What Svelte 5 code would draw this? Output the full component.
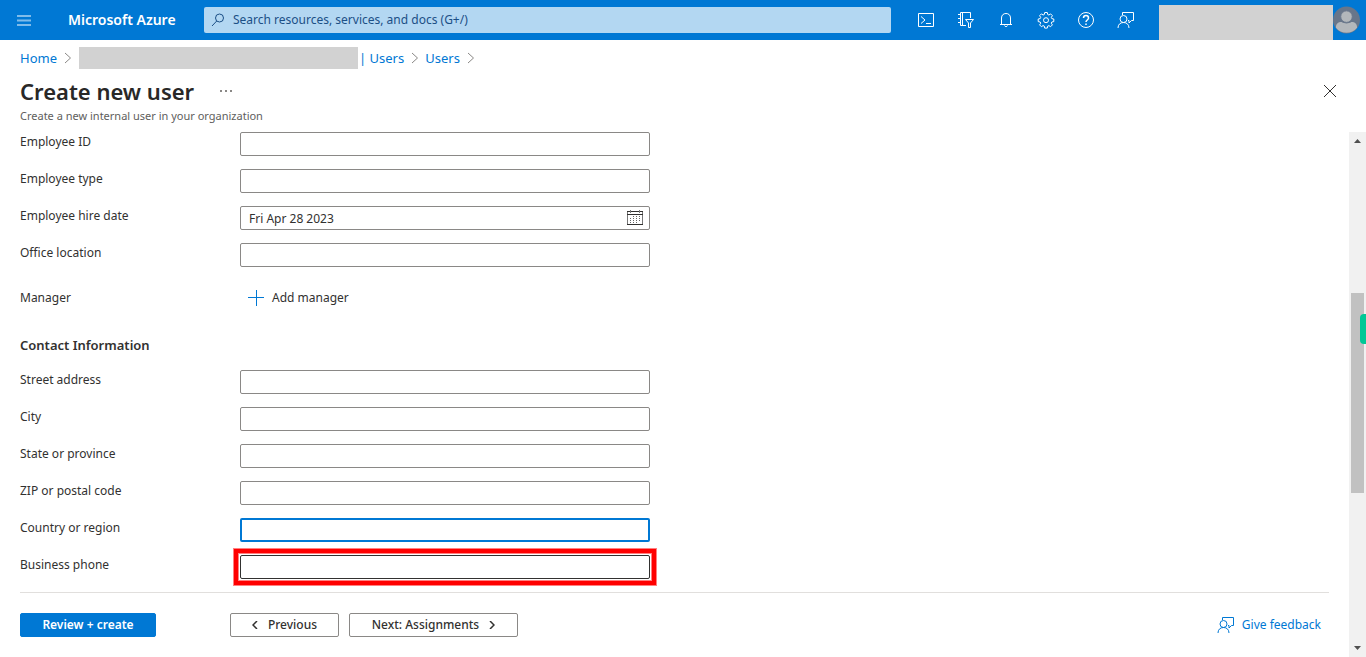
<script>
	const employeeFields = [
		{ id: 'employee-id', label: 'Employee ID' },
		{ id: 'employee-type', label: 'Employee type' },
		{ id: 'hire-date', label: 'Employee hire date', value: 'Fri Apr 28 2023', calendar: true },
		{ id: 'office', label: 'Office location' }
	];

	const contactFields = [
		{ id: 'street', label: 'Street address' },
		{ id: 'city', label: 'City' },
		{ id: 'state', label: 'State or province' },
		{ id: 'zip', label: 'ZIP or postal code' },
		{ id: 'country', label: 'Country or region', active: true },
		{ id: 'phone', label: 'Business phone', marked: true }
	];
</script>

{#snippet chevron()}
	<svg class="chevron" width="8" height="12" viewBox="0 0 8 12" aria-hidden="true">
		<path d="M1 1l5.500 5L1 11" />
	</svg>
{/snippet}

{#snippet feedbackIcon()}
	<svg width="18" height="18" viewBox="0 0 18 18" aria-hidden="true">
		<path d="M5.500 4V1.500h11v8h-2L12 12V9.500h-1" />
		<circle cx="6.500" cy="8" r="3.500" />
		<path d="M1 17c0-3.500 2.300-5.500 5.500-5.500S12 13.500 12 17" />
	</svg>
{/snippet}

{#snippet field(f)}
	<div class="row">
		<label for={f.id}>{f.label}</label>
		<div class="control" class:marked={f.marked}>
			<input id={f.id} type="text" class:active={f.active} value={f.value ?? ''} />
			{#if f.calendar}
				<button class="calendar" type="button" aria-label="Pick a date">
					<svg width="16" height="16" viewBox="0 0 16 16" shape-rendering="crispEdges" aria-hidden="true">
						<path d="M.5 2v13M15.500 2v13" stroke="#777" />
						<path d="M0 2.500h16M0 5.500h16M0 15.500h16" />
						<path d="M3.500 1v3M12.500 1v3" stroke="#777" />
						<path d="M6 7.500h8M3 9.500h11M3 11.500h11M3 13.500h8" stroke="#666" stroke-dasharray="1 2" />
					</svg>
				</button>
			{/if}
		</div>
	</div>
{/snippet}

<div class="portal">
	<header class="topbar">
		<button class="menu" aria-label="Show portal menu">
			<svg width="14" height="11" viewBox="0 0 14 11" aria-hidden="true">
				<path d="M0 1h14M0 5.500h14M0 10h14" />
			</svg>
		</button>
		<a class="brand" href="#home">Microsoft Azure</a>
		<div class="search">
			<svg width="14" height="14" viewBox="0 0 14 14" aria-hidden="true">
				<circle cx="8.500" cy="5" r="4" />
				<path d="M5.700 8L1 13" />
			</svg>
			<input type="text" aria-label="Search" placeholder="Search resources, services, and docs (G+/)" />
		</div>
		<nav class="tools">
			<button aria-label="Cloud Shell">
				<svg width="18" height="18" viewBox="0 0 18 18" aria-hidden="true">
					<path d="M1.500 2.500h15v13h-15zM4 5.500l4 3.500-4 3.500M9 12.500h5" />
				</svg>
			</button>
			<button aria-label="Directories and subscriptions">
				<svg width="18" height="18" viewBox="0 0 18 18" aria-hidden="true">
					<path d="M9 14.500H3.500v-13h10V7M5.500 1.500v13M1 3.500h3M1 7.500h3M1 11.500h3" />
					<path d="M8.500 8.500h8l-3 3.500v4.500h-2V12z" />
				</svg>
			</button>
			<button aria-label="Notifications">
				<svg width="18" height="18" viewBox="0 0 18 18" aria-hidden="true">
					<path d="M4.500 13.500V7c0-3 2-4.500 4.500-4.500S13.500 4 13.500 7v6.500M3 13.500h12M7.500 14.500c.5 1.500 2.500 1.500 3 0" />
				</svg>
			</button>
			<button aria-label="Settings">
				<svg width="18" height="18" viewBox="0 0 18 18" aria-hidden="true">
					<path
						d="M7.700 1.500h2.600l.4 2 1.200.5 1.700-1.100 1.800 1.800-1.100 1.700.5 1.200 2 .4v2.600l-2 .4-.5 1.200 1.100 1.700-1.800 1.800-1.700-1.100-1.200.5-.4 2H7.700l-.4-2-1.200-.5-1.700 1.100-1.800-1.800 1.100-1.700-.5-1.200-2-.4V8l2-.4.5-1.200-1.100-1.700 1.800-1.800L6.100 4l1.200-.5z"
					/>
					<circle cx="9" cy="9.200" r="2.500" />
				</svg>
			</button>
			<button aria-label="Help">
				<svg width="18" height="18" viewBox="0 0 18 18" aria-hidden="true">
					<circle cx="9" cy="9" r="7.500" />
					<path d="M6.500 7c0-3.300 5-3.300 5 0 0 2-2.500 2-2.500 4M9 12.500V14" stroke-width="1.500" />
				</svg>
			</button>
			<button aria-label="Feedback">{@render feedbackIcon()}</button>
		</nav>
		<div class="account"></div>
		<button class="avatar" aria-label="Account">
			<svg width="27" height="28" viewBox="0 0 28 28" aria-hidden="true">
				<circle cx="14" cy="14" r="14" fill="#68768a" />
				<path d="M3 22c0-4 2-6 6-6 3 2 7 2 10 0 4 0 6 2 6 6a14 14 0 0 1-22 0z" fill="#b3b7bb" />
				<circle cx="14" cy="10.500" r="6" fill="#b3b7bb" stroke="#68768a" />
			</svg>
		</button>
	</header>

	<div class="heading">
		<nav class="breadcrumb">
			<a href="#home">Home</a>
			{@render chevron()}
			<span class="redacted"></span>
			<a href="#tenant">| Users</a>
			{@render chevron()}
			<a href="#users">Users</a>
			{@render chevron()}
		</nav>
		<div class="title-row">
			<h1>Create new user</h1>
			<button class="more" aria-label="More">
				<svg width="12" height="2" viewBox="0 0 12 2" aria-hidden="true">
					<path d="M0 0h2v2H0zM5 0h2v2H5zM10 0h2v2h-2z" />
				</svg>
			</button>
			<button class="close" aria-label="Close">
				<svg width="12" height="12" viewBox="0 0 12 12" aria-hidden="true">
					<path d="M0 0l12 12M12 0L0 12" />
				</svg>
			</button>
		</div>
		<p>Create a new internal user in your organization</p>
	</div>

	<div class="body">
		<main>
			<form class="fields">
				{#each employeeFields as f}
					{@render field(f)}
				{/each}

				<div class="row manager">
					<span>Manager</span>
					<button class="add" type="button">
						<svg width="16" height="16" viewBox="0 0 16 16" aria-hidden="true">
							<path d="M0 7.500h16M8.500 0v16" />
						</svg>
						Add manager
					</button>
				</div>

				<h2>Contact Information</h2>

				{#each contactFields as f}
					{@render field(f)}
				{/each}
			</form>

			<footer>
				<button class="btn primary">Review + create</button>
				<button class="btn previous">
					<svg width="6" height="8" viewBox="0 0 6 8" aria-hidden="true"><path d="M5 0L1 4l4 4" /></svg>
					Previous
				</button>
				<button class="btn next">
					Next: Assignments
					<svg width="6" height="8" viewBox="0 0 6 8" aria-hidden="true"><path d="M1 0l4 4-4 4" /></svg>
				</button>
				<a class="feedback" href="#feedback">{@render feedbackIcon()}Give feedback</a>
			</footer>
		</main>

		<div class="scrollbar">
			<svg width="7" height="4" viewBox="0 0 7 4" aria-hidden="true"><path d="M0 4l3.500-4L7 4z" /></svg>
			<div class="thumb"><span class="tab"></span></div>
			<svg class="down" width="7" height="4" viewBox="0 0 7 4" aria-hidden="true"><path d="M0 0l3.500 4L7 0z" /></svg>
		</div>
	</div>
</div>

<style>
	:global(body) {
		background: #fff;
	}

	.portal {
		min-height: 100vh;
		display: flex;
		flex-direction: column;
		font-family: 'Segoe UI', 'Noto Sans', sans-serif;
		font-size: 12px;
		line-height: 20px;
		color: #323130;
	}

	.portal * {
		box-sizing: border-box;
	}

	button {
		display: flex;
		align-items: center;
		justify-content: center;
		padding: 0;
		border: none;
		background: none;
		font: inherit;
		color: inherit;
		cursor: pointer;
	}

	a {
		color: #0078d4;
		text-decoration: none;
	}

	svg {
		flex: none;
		fill: none;
		stroke: currentColor;
	}

	.topbar {
		display: flex;
		align-items: center;
		height: 40px;
		padding-right: 6px;
		background: #0078d4;
		color: #fff;
	}

	.menu {
		width: 48px;
		height: 40px;
		color: #80bcea;
	}

	.menu svg {
		stroke-width: 2;
	}

	.brand {
		width: 136px;
		margin-left: 20px;
		color: #fff;
		font-size: 14px;
		font-weight: 600;
		white-space: nowrap;
	}

	.search {
		flex: 1;
		display: flex;
		align-items: center;
		gap: 8px;
		height: 26px;
		margin-right: 15px;
		padding-left: 7px;
		border-radius: 2px;
		background: #b3d7f2;
		color: #1b4f86;
	}

	.search input {
		flex: 1;
		min-width: 0;
		padding: 0;
		border: none;
		outline: none;
		background: none;
		font: inherit;
		color: inherit;
	}

	.search input::placeholder {
		color: #1b4f86;
		opacity: 1;
	}

	.tools {
		display: flex;
	}

	.tools button {
		width: 40px;
		height: 40px;
	}

	.account {
		align-self: flex-end;
		width: 174px;
		height: 35px;
		margin-left: 13px;
		background: #d2d2d2;
	}

	.avatar svg {
		stroke: none;
	}

	.heading {
		display: flex;
		flex-direction: column;
		height: 92px;
		padding: 7px 24px 0 20px;
	}

	.breadcrumb {
		display: flex;
		align-items: center;
		height: 22px;
		font-size: 13px;
	}

	.chevron {
		margin: 0 6px 0 7px;
		color: #8a8886;
	}

	.redacted {
		width: 279px;
		height: 22px;
		margin: 0 1px;
		background: #d2d2d2;
	}

	.title-row {
		display: flex;
		align-items: center;
		height: 37px;
		padding-top: 7px;
	}

	h1 {
		margin: 0;
		font-size: 22px;
		line-height: 30px;
		font-weight: 600;
		color: #292827;
	}

	.more {
		width: 24px;
		height: 24px;
		margin-left: 20px;
	}

	.more svg {
		fill: #8a8886;
		stroke: none;
	}

	.close {
		width: 24px;
		height: 24px;
		margin: 0 0 0 auto;
	}

	p {
		margin: 0;
		font-size: 11px;
		color: #605e5c;
	}

	.body {
		flex: 1;
		display: flex;
	}

	main {
		flex: 1;
		display: flex;
		flex-direction: column;
		padding: 0 20px;
	}

	.fields {
		flex: 1;
	}

	.row {
		display: grid;
		grid-template-columns: 220px minmax(0, 410px);
		align-items: start;
		height: 37px;
	}

	.control {
		position: relative;
		height: 24px;
	}

	.control input {
		display: block;
		width: 100%;
		height: 24px;
		padding: 0 32px 0 8px;
		border: 1px solid #8a8886;
		border-radius: 2px;
		outline: none;
		background: #fff;
		font: inherit;
		color: inherit;
	}

	.control input.active {
		border: 2px solid #0078d4;
	}

	.marked input {
		position: relative;
		border-color: #323130;
	}

	/* highlight frame drawn around the input */
	.marked::before {
		content: '';
		position: absolute;
		inset: -6px;
		border: 4px solid #f00;
		box-shadow:
			0 0 0 1px #ff8080,
			inset 0 0 0 1px #ff8080;
	}

	.calendar {
		position: absolute;
		top: 3px;
		right: 7px;
		height: 16px;
	}

	.manager {
		align-items: center;
		height: 36px;
	}

	.add {
		justify-self: start;
		gap: 8px;
		height: 24px;
		margin-left: 8px;
	}

	.add svg {
		color: #0078d4;
	}

	h2 {
		margin: 19px 0 15px;
		font-size: 13px;
		line-height: 20px;
		font-weight: 600;
	}

	footer {
		display: flex;
		align-items: center;
		gap: 10px;
		padding: 20px 0;
		border-top: 1px solid #e1dfdd;
	}

	.btn {
		gap: 10px;
		height: 24px;
		border: 1px solid #8a8886;
		border-radius: 2px;
		font-weight: 500;
	}

	.btn svg {
		stroke-width: 1.5;
	}

	.primary {
		width: 136px;
		margin-right: 64px;
		border-color: #0078d4;
		background: #0078d4;
		color: #fff;
		font-weight: 600;
	}

	.previous {
		width: 109px;
	}

	.next {
		width: 169px;
	}

	.feedback {
		display: flex;
		align-items: center;
		gap: 7px;
		margin: 0 8px 0 auto;
	}

	.scrollbar {
		display: flex;
		flex-direction: column;
		align-items: center;
		width: 17px;
		padding: 7px 0;
		background: #f1f1f1;
	}

	.scrollbar svg {
		fill: #505050;
		stroke: none;
	}

	.scrollbar .down {
		margin-top: auto;
	}

	.thumb {
		position: relative;
		width: 13px;
		height: 200px;
		margin-top: 150px;
		background: #c1c1c1;
	}

	.tab {
		position: absolute;
		top: 21px;
		right: -2px;
		width: 6px;
		height: 30px;
		border-radius: 4px 0 0 4px;
		background: #00c896;
	}
</style>
